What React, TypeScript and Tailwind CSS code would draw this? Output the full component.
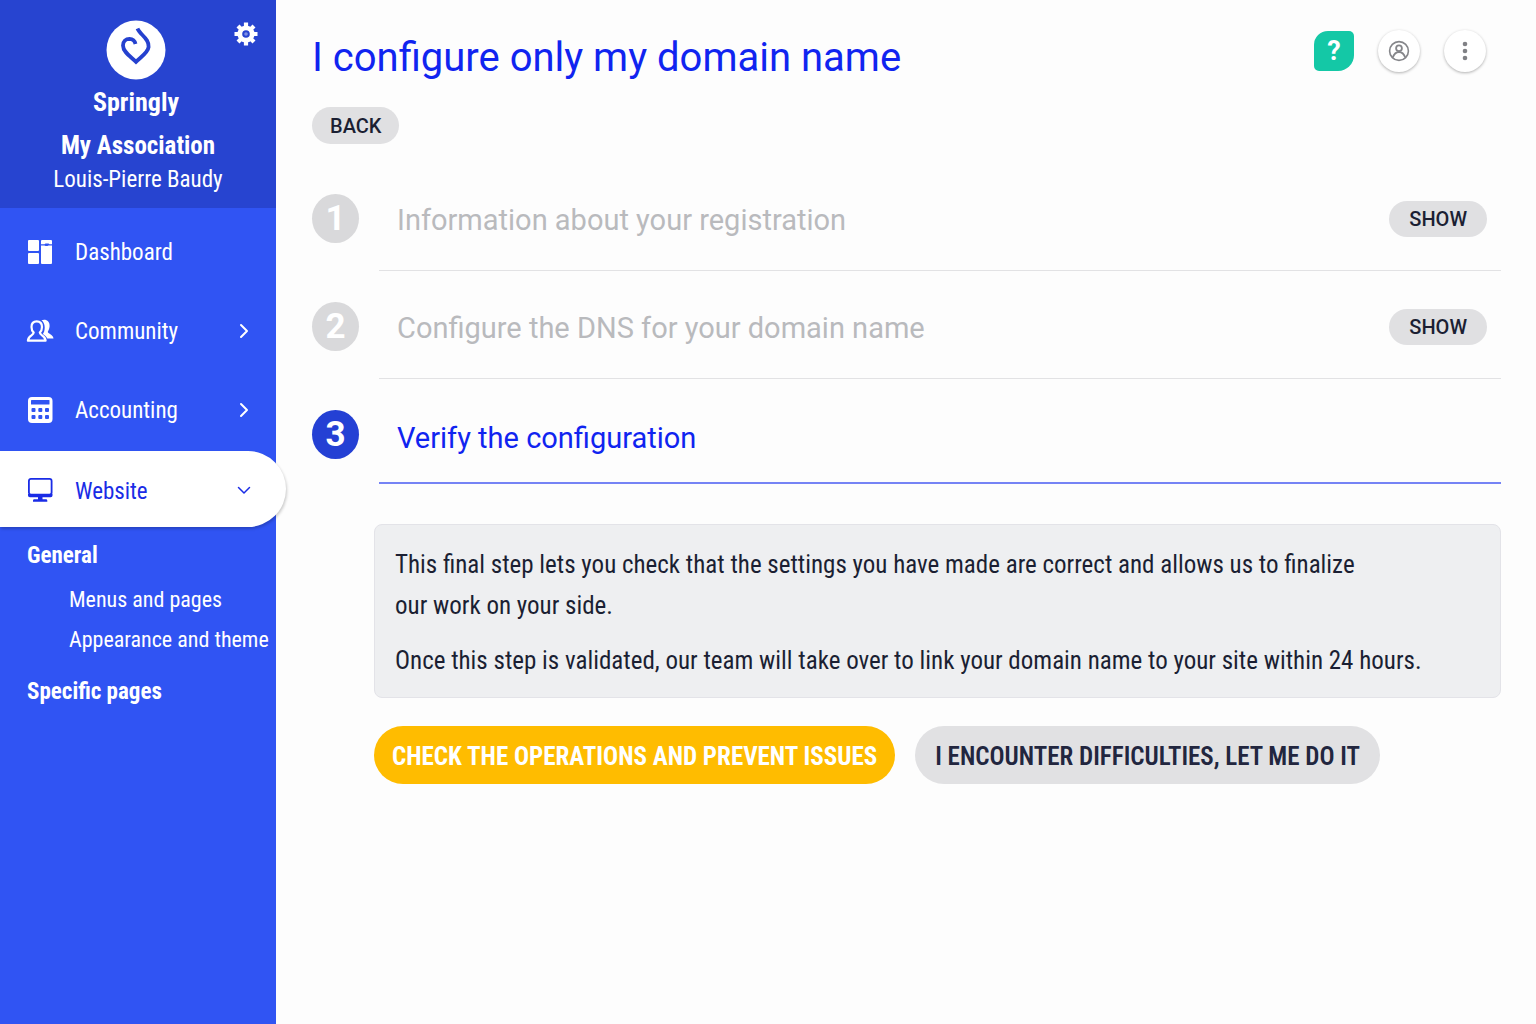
import React, { useState } from 'react';

const GearIcon = () => (
  <svg width="24" height="24" viewBox="0 0 24 24" fill="none" stroke="white">
    <circle cx="12" cy="12" r="6.200" strokeWidth="4.800" />
    <g strokeWidth="4.200">
      <path d="M12 .5v5M12 18.500v5M.5 12h5M18.500 12h5" />
      <path d="m4 4 3 3M17 17l3 3M4 20l3-3M17 7l3-3" />
    </g>
    <circle cx="12" cy="12" r="1.800" fill="white" fillOpacity=".4" stroke="none" />
  </svg>
);

const LogoIcon = () => (
  <svg width="60" height="60" viewBox="0 0 60 60" fill="none">
    <circle cx="30" cy="30" r="29.500" fill="white" />
    <path
      d="M31.500 8.500C34 15 43.500 18.500 42.600 27C42 32.500 36 36 30 41.800C24.500 36.500 17 32 17 25.500C17 21.500 19.800 18.900 23.500 18.900C27 19 28.800 21 29.500 24"
      stroke="#2541cf"
      strokeWidth="3.800"
    />
  </svg>
);

const DashboardIcon = () => (
  <svg width="28" height="28" viewBox="0 0 28 28" fill="currentColor">
    <rect x="2" y="2" width="11" height="11" rx="1" />
    <rect x="2" y="15" width="11" height="11" rx="1" />
    <rect x="15" y="2" width="11" height="24" rx="1" />
    <path d="M15 6.300h3.500l1-.8h3l1 .8H26v1.200h-3.500c-1.500.8-2.500.8-4 0H15z" fill="#3054f3" />
  </svg>
);

const CommunityIcon = () => (
  <svg width="28" height="28" viewBox="0 0 28 28" fill="none">
    <path
      d="M15.500 3.200C20 1.500 24 4.200 23.600 9.300c-.2 2.600-1.200 4.200-1.800 5.500-.4 1.600 5.400 2.600 5.700 6.700h-6.200c-.9-2.300-3.200-3.400-4.500-4.500 1.200-1.600 2-3.800 1.900-6.800-.1-3-1.200-5.400-3.200-7z"
      fill="currentColor"
    />
    <path
      d="M10.700 4.300c-3.200 0-5.200 2.200-5.200 5.600 0 2.400.9 4.400 2.200 5.700 0 3-5.600 2.600-5.800 8.100h17.700c-.2-5.500-5.800-5.100-5.800-8.100 1.300-1.300 2.200-3.300 2.200-5.700 0-3.400-2-5.600-5.300-5.600z"
      stroke="currentColor"
      strokeWidth="2.200"
      strokeLinejoin="round"
    />
  </svg>
);

const AccountingIcon = () => (
  <svg width="28" height="28" viewBox="0 0 28 28">
    <rect x="2" y="1" width="24.500" height="26" rx="4" fill="currentColor" />
    <g fill="#3054f3">
      <rect x="5" y="4" width="18.500" height="4.500" rx=".6" />
      <rect x="5.500" y="12" width="4" height="4" rx="1" />
      <rect x="12.300" y="12" width="4" height="4" rx="1" />
      <rect x="19" y="12" width="4" height="4" rx="1" />
      <rect x="5.500" y="19" width="4" height="4" rx="1" />
      <rect x="12.300" y="19" width="4" height="4" rx="1" />
      <rect x="19" y="19" width="4" height="4" rx="1" />
    </g>
  </svg>
);

const WebsiteIcon = () => (
  <svg width="28" height="28" viewBox="0 0 28 28" fill="currentColor">
    <rect x="2.900" y="2.900" width="22.700" height="15.700" rx="2" fill="none" stroke="currentColor" strokeWidth="1.800" />
    <path d="M2 18h24.500v1.500a1.800 1.800 0 0 1-1.800 1.800H3.800A1.800 1.800 0 0 1 2 19.500z" />
    <path d="M12 21h4.500v2.200H20a1.400 1.400 0 0 1 1.300 1.300v1.300H7v-1.300a1.400 1.400 0 0 1 1.300-1.300H12z" />
  </svg>
);

const ChevronIcon = ({ down = false }: { down?: boolean }) => (
  <svg width="16" height="16" viewBox="0 0 16 16" fill="none" stroke="currentColor" strokeLinecap="round" strokeLinejoin="round">
    {down ? <path d="m2.500 5.500 5.500 5.500 5.500-5.500" strokeWidth="1.500" /> : <path d="m5 2 6 6-6 6" strokeWidth="2" />}
  </svg>
);

const UserIcon = () => (
  <svg width="22" height="22" viewBox="0 0 22 22" fill="none" stroke="#85868a" strokeWidth="1.600">
    <circle cx="11" cy="11" r="9.400" />
    <circle cx="11" cy="8.300" r="2.900" strokeWidth="1.800" />
    <path d="M4.800 17.400c1.300-3.700 3.500-5.400 6.200-5.400s4.900 1.700 6.200 5.400" strokeWidth="1.800" />
  </svg>
);

const DotsIcon = () => (
  <svg width="22" height="22" viewBox="0 0 22 22" fill="#808185">
    <circle cx="11" cy="4" r="2.300" />
    <circle cx="11" cy="11" r="2.300" />
    <circle cx="11" cy="18" r="2.300" />
  </svg>
);

const navItems = [
  { label: 'Dashboard', icon: <DashboardIcon />, expandable: false },
  { label: 'Community', icon: <CommunityIcon />, expandable: true },
  { label: 'Accounting', icon: <AccountingIcon />, expandable: true },
];

const steps = [
  { id: 1, title: 'Information about your registration' },
  { id: 2, title: 'Configure the DNS for your domain name' },
  { id: 3, title: 'Verify the configuration' },
];

const Sidebar: React.FC = () => (
  <aside className="w-[276px] shrink-0 bg-[#3054f3] text-white font-['Roboto_Condensed',Roboto,sans-serif]">
    <div className="relative h-[208px] bg-[#2744d0] flex flex-col items-center pt-5 text-center">
      <div className="flex flex-col items-center pr-1">
        <LogoIcon />
        <div className="mt-1 text-[26px] leading-9 font-bold">Springly</div>
      </div>
      <div className="mt-2 text-[25px] leading-9 font-bold">My Association</div>
      <div className="text-[23px] leading-8">Louis-Pierre Baudy</div>
      <button aria-label="Settings" className="absolute right-[18px] top-[22px]">
        <GearIcon />
      </button>
    </div>

    <nav className="pt-1">
      {navItems.map(item => (
        <a key={item.label} href="#" className="flex items-center h-[79px] pl-[26px] pr-6 text-[23px]">
          {item.icon}
          <span className="ml-[21px] pt-1 flex-1">{item.label}</span>
          {item.expandable && <ChevronIcon />}
        </a>
      ))}

      {/* Active entry sticks out over the content */}
      <a
        href="#"
        className="relative z-10 mt-[2px] -mr-[10px] flex items-center h-[76px] pt-[2px] pl-[26px] pr-[34px] rounded-r-full bg-white text-[#1a2ce6] text-[23px] shadow-[1px_2px_3px_rgba(0,0,0,0.2)]"
      >
        <WebsiteIcon />
        <span className="ml-[21px] pt-1 flex-1">Website</span>
        <ChevronIcon down />
      </a>

      <div className="pl-[27px] pt-[9px]">
        <div className="text-[23px] leading-10 font-bold">General</div>
        <ul className="pl-[42px] pt-1 text-[22px] leading-10 whitespace-nowrap">
          <li><a href="#">Menus and pages</a></li>
          <li><a href="#">Appearance and theme</a></li>
        </ul>
        <div className="mt-3 text-[23px] leading-10 font-bold">Specific pages</div>
      </div>
    </nav>
  </aside>
);

const App: React.FC = () => {
  const [current, setCurrent] = useState(3);

  return (
    <div className="flex min-h-screen bg-[#fdfdfd] font-[Roboto,sans-serif] text-[#1b1f33]">
      <Sidebar />

      <main className="flex-1 min-w-0 pl-9 pr-[35px] pt-[30px]">
        <header className="flex items-start justify-between pr-[15px]">
          <h1 className="text-[40px] leading-[56px] text-[#1024f0]">I configure only my domain name</h1>
          <div className="flex items-center gap-6">
            <button
              aria-label="Help"
              className="w-10 h-10 bg-[#14c8a6] text-white text-[27px] font-bold rounded-tl-[14px] rounded-tr-[5px] rounded-br-[16px] rounded-bl-[5px]"
            >
              ?
            </button>
            <button aria-label="Account" className="w-[42px] h-[42px] rounded-full bg-white flex items-center justify-center shadow-[0_1px_3px_rgba(0,0,0,0.3)]">
              <UserIcon />
            </button>
            <button aria-label="More" className="w-[42px] h-[42px] rounded-full bg-white flex items-center justify-center shadow-[0_1px_3px_rgba(0,0,0,0.3)]">
              <DotsIcon />
            </button>
          </div>
        </header>

        <button className="mt-[21px] block h-[37px] px-[18px] rounded-full bg-[#e0e0e2] text-[20px] font-medium">
          BACK
        </button>

        <section className="mt-[19px]">
          {steps.map(step => {
            const active = step.id === current;
            return (
              <div key={step.id} className="flex items-start">
                <div
                  className={`mt-[31px] w-[47px] h-[49px] shrink-0 rounded-[50%] flex items-center justify-center pt-[2px] text-white text-[35px] font-bold ${active ? 'bg-[#2440d4]' : 'bg-[#d9d9db]'}`}
                >
                  {step.id}
                </div>
                <div
                  className={`ml-5 flex-1 flex items-center justify-between pl-[18px] pr-[14px] ${active ? 'h-[105px] pt-3 border-b-2 border-[#7583f5]' : 'h-[108px] pt-[5px] border-b border-[#e2e2e4]'}`}
                >
                  <h2 className={`pt-[2px] text-[29px] leading-9 ${active ? 'text-[#1024f0]' : 'text-[#b9babd]'}`}>{step.title}</h2>
                  {!active && (
                    <button
                      onClick={() => setCurrent(step.id)}
                      className="h-9 px-5 rounded-full bg-[#e0e0e2] text-[20px] font-medium"
                    >
                      SHOW
                    </button>
                  )}
                </div>
              </div>
            );
          })}
        </section>

        <div className="pl-[62px] font-['Roboto_Condensed',Roboto,sans-serif]">
          <div className="mt-10 rounded-lg border border-[#e3e3e8] bg-[#eeeff1] px-5 pt-[19px] pb-4 text-[25px] leading-[41px]">
            <p>
              This final step lets you check that the settings you have made are correct and allows us to finalize
              <br />
              our work on your side.
            </p>
            <p className="mt-[14px]">Once this step is validated, our team will take over to link your domain name to your site within 24 hours.</p>
          </div>

          <div className="mt-7 flex flex-wrap gap-5 text-[25px]">
            <button className="h-[58px] pt-1 px-[18px] rounded-full bg-[#ffbc00] text-white font-bold">
              CHECK THE OPERATIONS AND PREVENT ISSUES
            </button>
            <button className="h-[58px] pt-1 px-5 rounded-full bg-[#e1e1e3] text-[#22263f] font-semibold">
              I ENCOUNTER DIFFICULTIES, LET ME DO IT
            </button>
          </div>
        </div>
      </main>
    </div>
  );
};

export default App;
